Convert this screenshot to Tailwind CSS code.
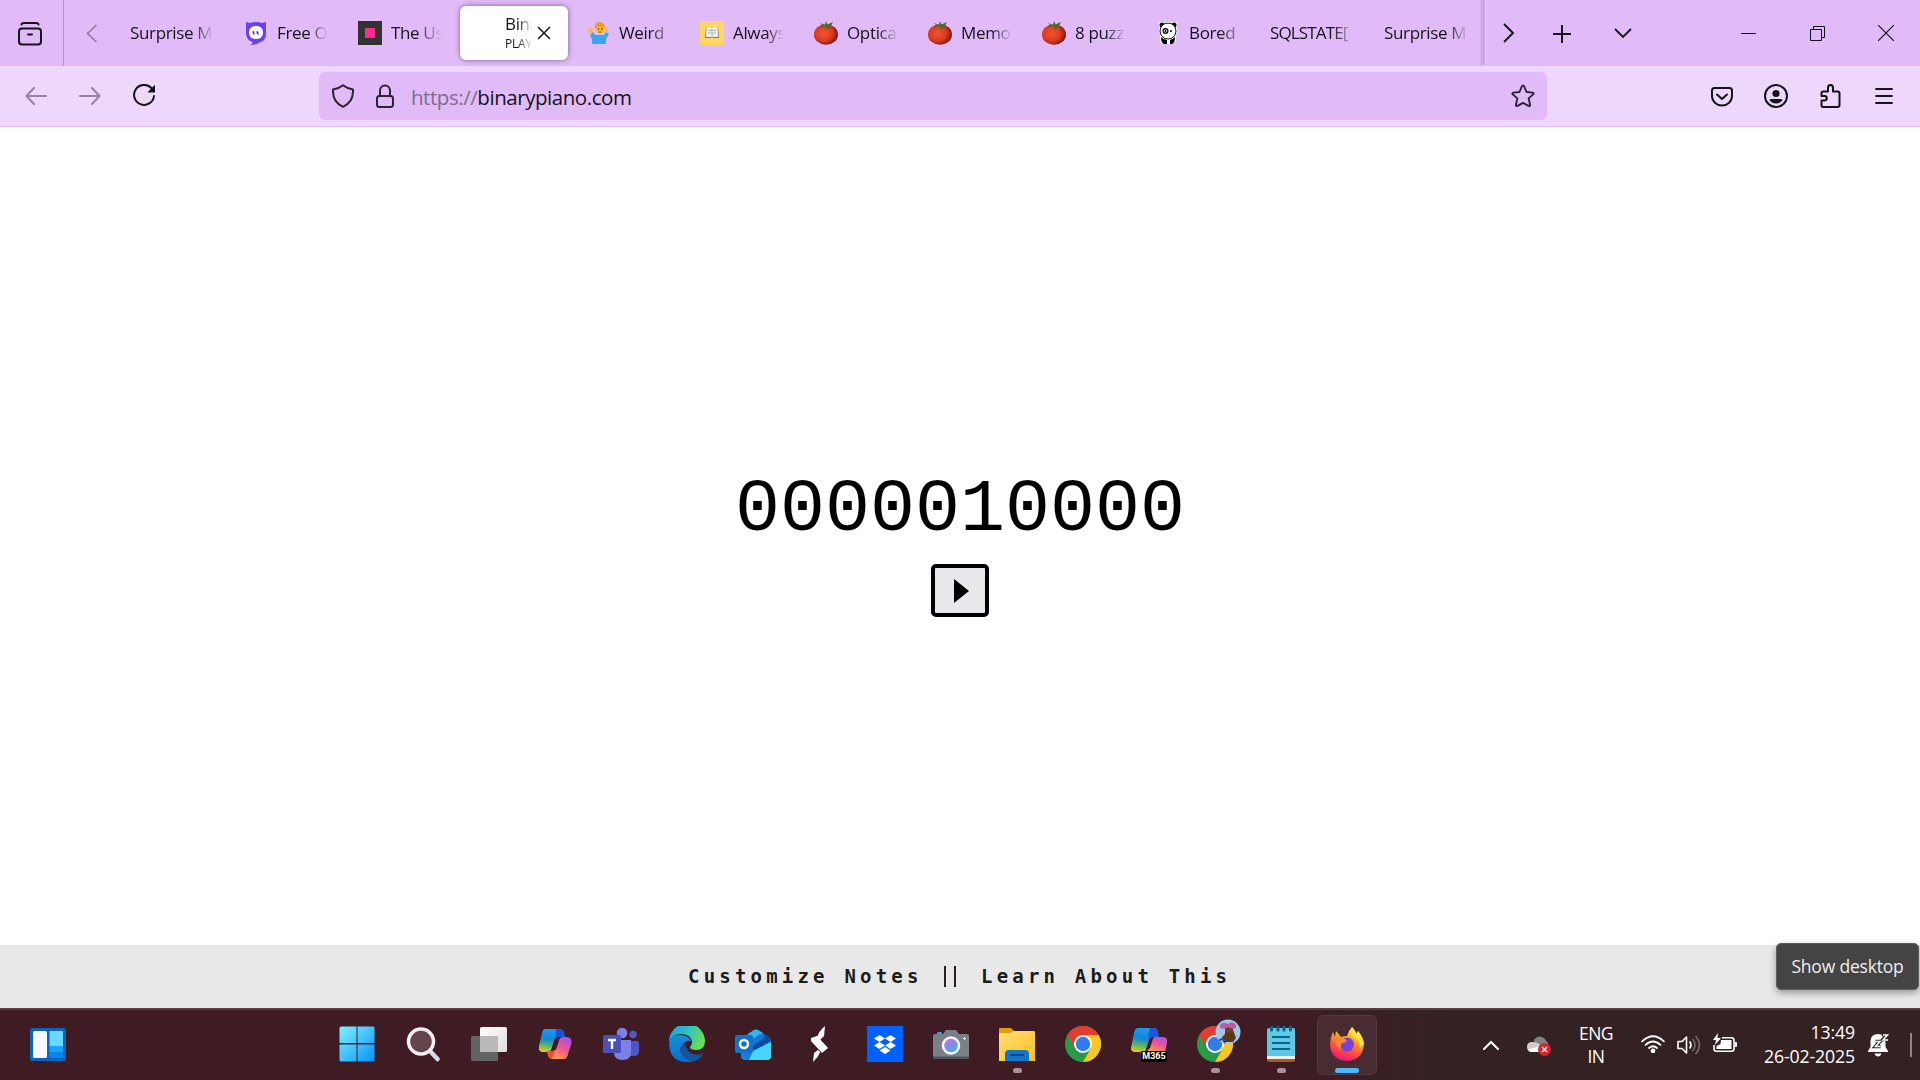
<!DOCTYPE html>
<html lang="en">
<head>
<meta charset="utf-8">
<title>Binary Piano</title>
<script src="https://cdn.jsdelivr.net/npm/@tailwindcss/browser@4"></script>
</head>
<body class="w-[1920px] h-[1080px] overflow-hidden bg-white flex flex-col font-['Open_Sans',sans-serif] text-[#15141a]">
<svg class="absolute w-0 h-0">
  <defs>
    <radialGradient id="tg" cx=".4" cy=".45" r=".6"><stop offset="0" stop-color="#f2542d"/><stop offset=".6" stop-color="#dc3a22"/><stop offset="1" stop-color="#7a1a17"/></radialGradient>
    <linearGradient id="cpA" x1="0.3" y1="0" x2="0.1" y2="1"><stop offset="0" stop-color="#1a9af0"/><stop offset=".4" stop-color="#1585d8"/><stop offset=".68" stop-color="#58b36a"/><stop offset="1" stop-color="#f5d00a"/></linearGradient>
    <linearGradient id="cpB" x1="0.8" y1="0" x2="0.3" y2="1"><stop offset="0" stop-color="#a84df0"/><stop offset=".5" stop-color="#f0588e"/><stop offset="1" stop-color="#ffa04a"/></linearGradient>
    <linearGradient id="edA" x1="0" y1="0.2" x2="1" y2=".5"><stop offset="0" stop-color="#1c9fd8"/><stop offset=".5" stop-color="#2ec3c4"/><stop offset="1" stop-color="#6be04a"/></linearGradient>
    <linearGradient id="edB" x1="0" y1="0" x2="0" y2="1"><stop offset="0" stop-color="#1390dc"/><stop offset="1" stop-color="#0b6dc4"/></linearGradient>
    <linearGradient id="win" x1="0" y1="0" x2="1" y2="1"><stop offset="0" stop-color="#7df4ff"/><stop offset="1" stop-color="#0a90ff"/></linearGradient>
    <linearGradient id="fold" x1="0" y1="0" x2="1" y2="1"><stop offset="0" stop-color="#ffe07a"/><stop offset="1" stop-color="#fcbf1c"/></linearGradient>
    <linearGradient id="ffx" x1=".8" y1="0" x2=".4" y2="1"><stop offset="0" stop-color="#fff04a"/><stop offset=".35" stop-color="#ffb02a"/><stop offset=".65" stop-color="#ff5a3a"/><stop offset="1" stop-color="#ee1476"/></linearGradient>
    <linearGradient id="lens" x1=".2" y1="0" x2=".8" y2="1"><stop offset="0" stop-color="#c86ee0"/><stop offset="1" stop-color="#32b4ee"/></linearGradient>
    <linearGradient id="tv" x1="0" y1="0" x2="1" y2="1"><stop offset="0" stop-color="#fff"/><stop offset="1" stop-color="#ddd"/></linearGradient>
    <symbol id="tomato" viewBox="0 0 24 24"><ellipse cx="12" cy="13.500" rx="12" ry="10.200" fill="url(#tg)"/><path d="M12 5 5 7l3-3-2-2 5 2 1-4 1.500 3.500L19 1l-2 4 3 2-5-.5-2.500 2.500z" fill="#4d6a2c"/></symbol>
    <symbol id="chrome" viewBox="0 0 36 36"><circle cx="18" cy="18" r="18" fill="#2a9a48"/><path d="M2.400 9A18 18 0 0 1 33.600 9H18L10.200 22.500z" fill="#e53c30"/><path d="M33.600 9A18 18 0 0 1 18 36L25.800 22.500 18 9z" fill="#fdc61e"/><circle cx="18" cy="18" r="9" fill="#fff"/><circle cx="18" cy="18" r="7.200" fill="#2f7cec"/></symbol>
  </defs>
</svg>

<!-- Tab strip -->
<header class="h-[66px] bg-[#e0bbf7] flex shrink-0">
  <div class="w-16 border-r border-[#b492c6] flex items-center pl-[17px]">
    <svg class="w-[26px] h-6 mt-px" viewBox="0 0 26 24" fill="none" stroke="#15141a" stroke-width="2" stroke-linecap="round"><path d="M4.500 2.500Q4.500 1 7 1h12q2.500 0 2.500 1.500"/><rect x="2" y="6.500" width="22" height="16" rx="3"/><path d="M11 12.500h4"/></svg>
  </div>
  <div class="w-12 flex items-center pl-[22px]"><svg class="w-3 h-[19px]" viewBox="0 0 12 19" fill="none" stroke="#91779f" stroke-width="1.700"><path d="M10.500 1 1.500 9.500l9 8.500"/></svg></div>
  <nav class="flex gap-[6px] pl-[6px] h-full items-center text-[17px] tracking-[-.35px] whitespace-nowrap">
    <div class="w-[108px] h-[54px] flex items-center px-3"><span class="w-[84px] overflow-hidden mask-[linear-gradient(to_right,black_75%,transparent)]">Surprise M</span></div>
    <div class="w-[108px] h-[54px] flex items-center px-3 gap-[9px]">
      <svg class="w-6 h-6 shrink-0" viewBox="0 0 24 24"><path d="M2 1 6 2Q12 0 18 2l4-1v12q0 7-7 8.500 0 2-9 2.500 3-1 2.500-3Q2 19 2 12z" fill="#6a42f4"/><rect x="5" y="5" width="14" height="13" rx="6" fill="#fff"/><path d="M9 9.500q2 1 1.500 4.500Q7.500 13 9 9.500M13 9.500q2 1 1.500 4.500-3-1-1.500-4.500" fill="#4b28c8"/></svg>
      <span class="w-[51px] overflow-hidden mask-[linear-gradient(to_right,black_60%,transparent)]">Free O</span></div>
    <div class="w-[108px] h-[54px] flex items-center px-3 gap-[9px]"><div class="w-6 h-6 shrink-0 bg-[#333] flex items-center justify-center"><div class="w-[10px] h-[10px] bg-[#fa2b8c]"></div></div><span class="w-[51px] overflow-hidden mask-[linear-gradient(to_right,black_50%,transparent)]">The Us</span></div>
    <div class="w-[108px] h-[54px] flex items-center pl-[45px] bg-white rounded-md shadow-[0_0_5px_rgba(90,50,110,.7)]">
      <div class="w-[28px] overflow-hidden mask-[linear-gradient(to_right,black_45%,transparent)]"><div class="leading-[20px]">Bina</div><div class="text-[12px] leading-[18px] mt-px tracking-[-.2px]">PLAY</div></div>
      <svg class="w-[14px] h-[14px] ml-1 shrink-0" viewBox="0 0 14 14" stroke="#15141a" stroke-width="1.500"><path d="m1 1 12 12M13 1 1 13"/></svg>
    </div>
    <div class="w-[108px] h-[54px] flex items-center pl-[14px] pr-3 gap-[7px]">
      <svg class="w-6 h-6 shrink-0" viewBox="0 0 24 24"><path d="M4 23v-5l-2-4 3-3 2 3h9l2-3 3 2-3 5v5z" fill="#3ba4f5"/><circle cx="12" cy="7.500" r="5" fill="#fbc02d"/><path d="M7 8q-1-6 4-7 6 0 6 6-6-3-10 1z" fill="#f29d12"/><path d="m0 6 5 2-1 4-2 1-1-3zM17 8l3-1v4l-3 1z" fill="#fbbd2a"/><circle cx="10.500" cy="8" r=".7"/><circle cx="14" cy="8" r=".7"/><path d="M10.500 11h3" stroke="#8a4b12"/></svg>
      <span class="w-[51px] overflow-hidden mask-[linear-gradient(to_right,black_60%,transparent_110%)]">Weird</span></div>
    <div class="w-[108px] h-[54px] flex items-center px-3 gap-[9px]">
      <svg class="w-6 h-6 shrink-0" viewBox="0 0 24 24"><path fill="#fdd663" d="M0 0h24v24H0z"/><path d="M6 7h12l1 10H5z" fill="#6e7c86"/><path d="M6.500 7q4-1 5.500.500Q13.500 6 17.500 7l.500 9q-4-.500-6 .500-2-1-6-.500z" fill="#f6f6f2"/><path d="M12 7.500v9M8 9.500h3M8 12h3M13 9.500h3M13 12h3" stroke="#8c979e" stroke-width=".8"/></svg>
      <span class="w-[51px] overflow-hidden mask-[linear-gradient(to_right,black_65%,transparent)]">Always</span></div>
    <div class="w-[108px] h-[54px] flex items-center px-3 gap-[9px]"><svg class="w-6 h-6 shrink-0"><use href="#tomato"/></svg><span class="w-[51px] overflow-hidden mask-[linear-gradient(to_right,black_60%,transparent)]">Optica</span></div>
    <div class="w-[108px] h-[54px] flex items-center px-3 gap-[9px]"><svg class="w-6 h-6 shrink-0"><use href="#tomato"/></svg><span class="w-[51px] overflow-hidden mask-[linear-gradient(to_right,black_60%,transparent)]">Memo</span></div>
    <div class="w-[108px] h-[54px] flex items-center px-3 gap-[9px]"><svg class="w-6 h-6 shrink-0"><use href="#tomato"/></svg><span class="w-[51px] overflow-hidden mask-[linear-gradient(to_right,black_60%,transparent)]">8 puzz</span></div>
    <div class="w-[108px] h-[54px] flex items-center px-3 gap-[9px]">
      <svg class="w-6 h-6 shrink-0" viewBox="0 0 24 24"><path d="M3 1h6q4-1 7 0h5v6q1 5-1 7v5q-1 4-5 4H8q-4 0-4-4v-5Q2 10 3 7z" fill="#fff"/><circle cx="6" cy="4" r="2.500"/><circle cx="18" cy="4" r="2.500"/><path d="M5 16q3 3 6 3v4H8q-3-1-3-7M19 16q-3 3-5 3v4h2q3-1 3-7"/><ellipse cx="12" cy="10" rx="8" ry="8" fill="#fff" stroke="#111"/><circle cx="9.500" cy="10" r="3"/><circle cx="9.500" cy="10" r="1.400" fill="none" stroke="#fff" stroke-width=".8"/><circle cx="15" cy="10" r="1"/></svg>
      <span class="w-[51px] overflow-hidden mask-[linear-gradient(to_right,black_60%,transparent_110%)]">Bored</span></div>
    <div class="w-[108px] h-[54px] flex items-center px-3"><span class="w-[84px] overflow-hidden tracking-[-.85px] mask-[linear-gradient(to_right,black_75%,transparent)]">SQLSTATE[</span></div>
    <div class="w-[108px] h-[54px] flex items-center px-3"><span class="w-[84px] overflow-hidden mask-[linear-gradient(to_right,black_75%,transparent)]">Surprise M</span></div>
  </nav>
  <div class="w-[5px] h-[65px] bg-linear-to-r from-[#d8b4ef] to-[#c6a3dc]"></div>
  <div class="flex-1 flex items-center border-l border-[#e8ccf8]">
    <svg class="w-3 h-[20px] ml-[17px]" viewBox="0 0 12 20" fill="none" stroke="#15141a" stroke-width="1.900"><path d="m1 1 9 9-9 9"/></svg>
    <svg class="w-[18px] h-[18px] ml-[38px] mt-[2px]" viewBox="0 0 18 18" stroke="#15141a" stroke-width="2"><path d="M9 0v18M0 9h18"/></svg>
    <svg class="w-[18px] h-[11px] ml-[43px]" viewBox="0 0 18 11" fill="none" stroke="#15141a" stroke-width="1.800"><path d="m1 1 8 8 8-8"/></svg>
    <div class="w-[15px] h-px bg-[#15141a] ml-[109px]"></div>
    <svg class="w-[15px] h-[15px] ml-[54px]" viewBox="0 0 15 15" fill="none" stroke="#15141a"><path d="M.5 3.500h11v11H.5zM3.500 3.500v-3h11v11h-3"/></svg>
    <svg class="w-4 h-4 ml-[53px]" viewBox="0 0 16 16" stroke="#15141a" stroke-width="1.200"><path d="m0 0 16 16M16 0 0 16"/></svg>
  </div>
</header>

<!-- Navigation toolbar -->
<div class="h-[61px] shrink-0 bg-[#edd7fa] border-b border-[#e0bbf7] flex items-center">
  <svg class="w-[22px] h-[18px] ml-[25px]" viewBox="0 0 22 18" fill="none" stroke="#9684a0" stroke-width="2" stroke-linecap="round" stroke-linejoin="round"><path d="M21 9H1.500M9 1 1.500 9 9 17"/></svg>
  <svg class="w-[22px] h-[18px] ml-8" viewBox="0 0 22 18" fill="none" stroke="#9684a0" stroke-width="2" stroke-linecap="round" stroke-linejoin="round"><path d="M1 9h19.500M13 1l7.500 8-7.500 8"/></svg>
  <svg class="w-6 h-6 ml-8" viewBox="0 0 24 24" fill="none"><path d="M19 4.800A10 10 0 1 0 21 12" stroke="#15141a" stroke-width="2" stroke-linecap="round"/><path d="M22 1.500V8.500h-6.500q-1 0-.3-.9l5.700-5.800q1.100-1 1.100-.3z" fill="#15141a"/></svg>
  <div class="w-[1228px] h-12 ml-[162px] rounded-[6px] bg-[#e0bbf7] flex items-center">
    <svg class="w-6 h-6 ml-3" viewBox="0 0 24 24" fill="none" stroke="#2b2233" stroke-width="2" stroke-linejoin="round"><path d="M12 1.200Q16 4.500 22 5.500q.7 12.500-10 17.300Q1.300 18 2 5.500 8 4.500 12 1.200z"/></svg>
    <svg class="w-[18px] h-6 ml-[21px]" viewBox="0 0 18 24" fill="none" stroke="#2b2233" stroke-width="2"><rect x="1" y="12" width="16" height="11" rx="2.500"/><path d="M4 12V6.500a5 5 0 0 1 10 0V12"/></svg>
    <div class="ml-[17px] mt-[3px] text-[20.500px] whitespace-nowrap tracking-[-.45px]"><span class="text-[#806b8e]">https://</span>binarypiano.com</div>
    <svg class="w-6 h-6 ml-auto mr-3" viewBox="0 0 24 24" fill="none" stroke="#2b2233" stroke-width="1.900" stroke-linejoin="round"><path d="M12 1.500q.8 0 1.200 1L15.500 8l6 .6q1.900.4.700 1.800l-4.600 4 1.500 6.300q.1 1.900-1.600 1.200L12 18.800l-5.500 3.100q-1.700.7-1.600-1.200l1.500-6.300-4.600-4Q.6 9 2.500 8.600l6-.6 2.300-5.500q.4-1 1.200-1z"/></svg>
  </div>
  <div class="flex-1 flex items-center pl-[163px]">
    <svg class="w-6 h-6" viewBox="0 0 24 24" fill="none" stroke="#15141a" stroke-width="2" stroke-linecap="round" stroke-linejoin="round"><path d="M4.500 4h15Q22 4 22 6.500V12a10 9.500 0 0 1-20 0V6.500Q2 4 4.500 4zM7 10.500l5 4.500 5-4.500"/></svg>
    <svg class="w-6 h-6 ml-[30px]" viewBox="0 0 24 24"><circle cx="12" cy="12" r="11" fill="none" stroke="#15141a" stroke-width="2"/><circle cx="12" cy="9.500" r="3.600" fill="#15141a"/><path d="M7.500 15h9Q18.800 15 18.300 16.500 16 19.500 12 19.500T5.700 16.500Q5.200 15 7.500 15z" fill="#15141a"/></svg>
    <svg class="w-6 h-6 ml-[31px]" viewBox="0 0 24 24" fill="none" stroke="#15141a" stroke-width="2" stroke-linejoin="round"><path d="M4 7.500h5V4q0-3 2.500-3T14 4v3.500h4.500q2 0 2 2V21q0 2-2 2H4q-1.500 0-1.500-2v-4.500h3.300q2-.3 2-2.200t-2-2.200H2.500V9q0-1.500 1.500-1.500z"/></svg>
    <svg class="w-[18px] h-4 ml-8" viewBox="0 0 18 16" stroke="#15141a" stroke-width="1.800" stroke-linecap="round"><path d="M1 1h16M1 8h16M1 15h16"/></svg>
  </div>
</div>

<!-- Page content -->
<main class="h-[818px] shrink-0 flex flex-col items-center">
  <div class="mt-[341px] h-[85px] leading-[85px] text-[75px] font-['Liberation_Mono',monospace] text-black">0000010000</div>
  <button class="mt-[11px] w-[58px] h-[53px] border-4 border-black rounded-[5px] bg-[#e9e9ed] flex items-center justify-center"><svg class="w-[15px] h-6 ml-[3px]" viewBox="0 0 15 24"><path d="M0 0v24l15-12z"/></svg></button>
</main>
<footer class="h-[63px] shrink-0 bg-[#e8e8e8] flex items-center pl-[688px] text-[19px] font-bold tracking-[4.200px] whitespace-pre text-[#1c1c1c] font-['DejaVu_Sans_Mono',monospace]"><a class="w-[236px]">Customize Notes</a><span class="w-[57px] flex gap-[8px] pl-[20px]"><i class="w-[2px] h-[21px] bg-[#2a2020]"></i><i class="w-[2px] h-[21px] bg-[#2a2020]"></i></span><a>Learn About This</a></footer>

<!-- Taskbar -->
<div class="h-[72px] shrink-0 border-t-2 border-[#5a3c44] bg-[linear-gradient(to_right,#3f1c24_0,#3f1c24_1300px,#342223_1450px,#342223)] flex items-center text-white">
  <div class="w-[324px] pl-[30px]">
    <svg class="w-9 h-[33px] -mt-px" viewBox="0 0 36 33"><rect width="36" height="33" rx="2" fill="#0c63b8"/><rect x="3" y="3" width="14" height="27" rx="1.500" fill="#f5f7fa"/><path fill="#68d8ff" d="M19.500 3H33v15H19.500z"/><path fill="#1ba2fb" d="M19.500 18H33v6H19.500z"/><path fill="#0687ee" d="M19.500 24H33v6H19.500z"/></svg>
  </div>
  <div class="flex h-full [&>div]:w-[66px] [&>div]:h-full [&>div]:flex [&>div]:items-center [&>div]:justify-center [&>div]:relative [&_svg]:w-9 [&_svg]:h-9 [&_svg]:-mt-[2px]">
    <div><svg viewBox="0 0 36 36"><path d="M2 .5H17.500V17H.5V2Q.5.5 2 .5zM18.500.5H34q1.500 0 1.500 1.500v15h-17zM.5 18.500h17v17H2Q.5 35.500.5 34zM18.500 18.500h17V34q0 1.500-1.500 1.500H18.500z" fill="url(#win)"/></svg></div>
    <div><svg viewBox="0 0 36 36"><path d="M25 25l7.500 8" stroke="#d6dae2" stroke-width="4.500" stroke-linecap="round"/><circle cx="16" cy="15.500" r="12.500" fill="#65444d" stroke="#f0f0f2" stroke-width="3.500"/></svg></div>
    <div><svg viewBox="0 0 36 36"><rect y="10" width="27" height="25" rx="1.500" fill="#636363"/><rect x="9" y="1" width="27" height="25" rx="1.500" fill="url(#tv)"/><path d="M9 10h18v16H9z" fill="#b9b9b9"/></svg></div>
    <div><svg viewBox="0 0 36 36"><path d="M8 3h14q4 0 5 4l1 4h-6q-4 0-5 4l-3 9q-1 2-4 2H6q-5 0-4-6L5 7q1-4 3-4z" fill="url(#cpA)"/><path d="M19 3h3q4 0 5 4l1 4h-6q-3 0-3.500 2z" fill="#1a4fd6"/><path d="M27 33H15q-3 0-4-4l-1-4h5q4 0 5-4l2.500-8q1-2 3.500-2h4q5 0 4.500 6L31 28q-1 5-4 5z" fill="url(#cpB)"/><path d="M10 25h5q2 0 3-1l-3 9q-3 0-4-4z" fill="#f24b33"/></svg></div>
    <div><svg viewBox="0 0 36 36"><circle cx="30" cy="8.500" r="3.700" fill="#5059c9"/><path d="M26 15h8q2 0 2 2v8q0 5-5 5h-5z" fill="#4f55c4"/><circle cx="19" cy="7" r="5.300" fill="#7b83eb"/><path d="M12 14h16v12q0 8-8.500 8T11 26z" fill="#7b83eb"/><rect y="9" width="18" height="18" rx="1.500" fill="#4a50b8"/><path d="M5 14h8M9 14v9" stroke="#fff" stroke-width="2.400"/></svg></div>
    <div><svg viewBox="0 0 36 36"><path d="M0 16A18 18 0 0 1 36 15q0 9-9 9-6 0-6-3 2-2 2-5Q22 8 12 8 4 8 0 16z" fill="url(#edA)"/><path d="M0 18Q1 9 11 9q9 0 11 6-4-1-6 1-7 9 5 15 6 2 12-1Q27 36 18 36 1 36 0 18z" fill="url(#edB)"/><path d="M16 16q-8 5-3 13 6 8 15 5 5-3 6-7-7 3-12 0-6-4-6-11z" fill="#12529e"/></svg></div>
    <div><svg viewBox="0 0 36 36"><path d="M6 13 19 4q2-1 4 0l12 8q1 1 1 3v15q0 4-4 4H10q-4 0-4-4z" fill="#1681cf"/><path d="M8 11.500 19 4q2-1 4 0l5 3-15 10z" fill="#35b4f0"/><path d="m15 19 15-10 5 3q1 1 1 3L18 25z" fill="#0a4da2"/><path d="m15 15 10-7 5 3-12 9z" fill="#0b7ad8"/><path d="M36 16v14q0 4-4 4H14l4-9z" fill="#47d5fa"/><rect y="9" width="18" height="18" rx="2" fill="#1173cc"/><circle cx="9" cy="18" r="4" fill="none" stroke="#fff" stroke-width="2.400"/></svg></div>
    <div><svg viewBox="0 0 36 36"><path d="m24 0-1 10-4 4-3-2q1-6 8-12zM16 10l11 12-6 5L10 15v-3zM12 36l1-9 4-3 2 2q-1 4-7 10z" fill="#fff"/></svg></div>
    <div><svg viewBox="0 0 36 36"><path fill="#0061fe" d="M0 0h36v36H0z"/><path d="m12.500 9 5.500 3.500-5.500 3.500L7 12.500zM23.500 9l5.500 3.500-5.500 3.500-5.500-3.500zM12.500 16l5.500 3.500-5.500 3.500L7 19.500zM23.500 16l5.500 3.500-5.500 3.500-5.500-3.500zM18 21l5.500 3.500L18 28l-5.500-3.500z" fill="#fff"/></svg></div>
    <div><svg viewBox="0 0 36 36"><rect x="4" y="6" width="5" height="4" rx="1" fill="#2ba4e4"/><path d="M2 8h8l3-4h10l3 4h8q2 0 2 2v21q0 2-2 2H2q-2 0-2-2V10q0-2 2-2z" fill="#7b8087"/><path d="M0 30.500h36v.500q0 2-2 2H2q-2 0-2-2z" fill="#50555b"/><circle cx="18" cy="19.500" r="9.300" fill="#f4f4f4"/><circle cx="18" cy="19.500" r="6.800" fill="url(#lens)"/><path d="M31.500 11v3M30 12.500h3" stroke="#ddd"/></svg></div>
    <div><svg viewBox="0 0 36 36"><path d="M0 3q0-1 1-1h10q2 0 3 2l3 3H0z" fill="#dfa006"/><path d="M0 7h11l4-2h20q1 0 1 1v29H0z" fill="url(#fold)"/><path d="M6 35v-7q0-4 4-4h16q4 0 4 4v7z" fill="#1374c9"/><path d="M11 29h14" stroke="#0a4a8c" stroke-width="2"/></svg><i class="absolute bottom-[7px] w-[9px] h-[5px] rounded-full bg-[#a89399]"></i></div>
    <div><svg><use href="#chrome"/></svg></div>
    <div><svg viewBox="0 0 36 36"><path d="M7 2h16q4 0 4 5l1 4h-6q-3 0-4 3l-4 12H4q-4 0-4-4L3 7q1-5 4-5z" fill="url(#cpA)"/><path d="M19 2h4q4 0 4 5l1 4h-6q-3 0-4 3-2-3 1-12z" fill="#1b58da"/><path d="M23 11h9q5 0 4 6l-2 9H15l4-4 3-9z" fill="url(#cpB)"/><path d="M9 25h10l-1 4h-8z" fill="#f05a35"/></svg><span class="absolute left-[25px] top-[41px] w-[26px] h-[11px] rounded-[2px] bg-black text-[9px] leading-[11px] font-bold text-center font-['Roboto']">M365</span></div>
    <div><svg><use href="#chrome"/></svg><svg class="absolute left-[33px] top-[11px] !w-[26px] !h-[26px]" viewBox="0 0 26 26"><circle cx="13" cy="13" r="12.500" fill="#9fc8e8"/><path d="m10 10 8 1 3 8-3 4H9l-2-5 3-3z" fill="#5b3418"/><circle cx="14" cy="10" r="4" fill="#6b3f20"/><path d="M5 6q3-4 8-1 5-4 8 1v3q-4 2-8-1-4 3-8 1z" fill="#c05aa0"/><path d="m4 21 4-1 2 4" stroke="#334487" fill="none" stroke-width="2"/></svg><i class="absolute bottom-[7px] w-[9px] h-[5px] rounded-full bg-[#a89399]"></i></div>
    <div><svg viewBox="0 0 36 36"><path fill="#ad5716" d="M4 31h28v3q0 2-2 2H6q-2 0-2-2z"/><path fill="#eee" d="M4 29h28v4H4z"/><path fill="#5cc8e4" d="M4 4q0-2 2-2h24q2 0 2 2v26H4z"/><path d="M9 11h18M9 17h18M9 23h18" stroke="#0e638b" stroke-width="2"/><path d="M8.500 1v3M15 1v3M21 1v3M27.500 1v3" stroke="#0e638b" stroke-width="3" stroke-linecap="round"/></svg><i class="absolute bottom-[7px] w-[9px] h-[5px] rounded-full bg-[#a89399]"></i></div>
    <div><span class="w-[60px] h-[60px] rounded-[6px] border border-[#523a40] bg-[#482c32] flex items-center justify-center"><svg viewBox="0 0 36 36"><path d="M23 1q3 3 4 7l2-3q5 6 6 13-1 16-17 17Q2 34 1 19q0-7 3-13l2 5 1-6 5 6q3-1 6-1 2-6 5-9z" fill="url(#ffx)"/><path d="M23 1q-2 5 1 9 7 4 7 12l4-4q-1-7-6-13l-1 4q-2-5-5-8z" fill="#ffe23c"/><circle cx="18" cy="18.500" r="7" fill="#7a42dc"/><path d="M7 12q4-2 9 1l2 2q-2 2-5 2-3 4 0 7-5-1-6-6z" fill="#ff8a36"/></svg></span><i class="absolute bottom-[7px] w-6 h-[5px] rounded-full bg-[#4cb8ff]"></i></div>
  </div>
  <!-- System tray -->
  <div class="flex-1 flex items-center h-full pl-[103px] relative">
    <svg class="w-4 h-[10px] shrink-0" viewBox="0 0 16 10" fill="none" stroke="#fff" stroke-width="2" stroke-linecap="round"><path d="m1 9 7-7 7 7"/></svg>
    <svg class="w-6 h-5 ml-7 mt-[2px] shrink-0" viewBox="0 0 24 20"><path d="M7 4q4-6 10-2 2 3 4 5v6H7z" fill="#858181"/><path d="M0 11q0-5 5-5 6 0 8 3l-2 7H5q-5 0-5-5z" fill="#ccc"/><path d="M1 13q4 0 12-3v6H5q-3 0-4-3z" fill="#fff"/><circle cx="17.500" cy="13.500" r="6.500" fill="#d8222d"/><path d="m15 11 5 5m0-5-5 5" stroke="#fff" stroke-width="1.400"/></svg>
    <div class="w-[60px] ml-[15px] text-center text-[17.500px] leading-[23px] tracking-[-.6px] shrink-0">ENG<br>IN</div>
    <svg class="w-6 h-[18px] ml-[15px] mt-[-2px] shrink-0" viewBox="0 0 24 18" fill="none" stroke="#fff" stroke-width="1.700" stroke-linecap="round"><path d="M1 6.500Q12-4 23 6.500M4.500 10q7.500-7 15 0M8 13q4-3.500 8 0"/><circle cx="12" cy="15.800" r="1.500" fill="#fff"/></svg>
    <svg class="w-6 h-5 ml-3 mt-[-1px] shrink-0" viewBox="0 0 24 20" fill="none" stroke="#fff" stroke-width="1.600" stroke-linejoin="round" stroke-linecap="round"><path d="M1 6.500h4L9.500 2v16L5 13.500H1zM13 7q2 3 0 6"/><path d="M16 4.500q4 5.500 0 11M19 1.500q7 8.500 0 17" stroke="#786b6c"/></svg>
    <svg class="w-6 h-5 ml-3 mt-[-4px] shrink-0" viewBox="0 0 24 20"><path d="M9 4.800h9.500q2.500 0 2.500 2.500v8.500q0 2.500-2.500 2.500h-15Q1 18.300 1 15.800V12" fill="none" stroke="#fff" stroke-width="1.600"/><path d="M8 7h10.500v9h-15v-3l4-2zM22 9h1q1 0 1 1v3q0 1-1 1h-1zM5 0 0 7h3l-1 5 6-7H4.500z" fill="#fff"/></svg>
    <div class="w-[110px] ml-[8px] mt-[-2px] text-right text-[17.700px] leading-[24px] tracking-[-.12px] whitespace-nowrap shrink-0">13:49<br>26-02-2025</div>
    <svg class="w-[21px] h-6 ml-[13px] shrink-0" viewBox="0 0 21 24"><path d="M10 1q7 0 7.500 7v6l2.500 4v1H0v-1l2.500-4V8Q3 1 10 1zM6.500 20.500h7q-1 3-3.500 3t-3.500-3z" fill="#fff"/><path d="M7.500 8.500h4.500l-4.500 5h5M14 1.500h5.500l-4.500 5H20" fill="none" stroke="#342223" stroke-width="3.600"/><path d="M7.500 8.500h4.500l-4.500 5h5M15 2h4.500l-4.500 5h5" fill="none" stroke="#fff" stroke-width="1.500"/></svg>
    <i class="w-[2px] h-6 ml-[21px] bg-[#90868a] shrink-0"></i>
    <div class="absolute right-px top-[-67px] w-[143px] h-[47px] rounded-[5px] bg-[#444] border border-[#5d5d5d] shadow-[0_3px_7px_rgba(0,0,0,.35)] flex items-center justify-center text-[17.500px] tracking-[-.2px] text-[#eee] whitespace-nowrap">Show desktop</div>
  </div>
</div>
</body>
</html>
